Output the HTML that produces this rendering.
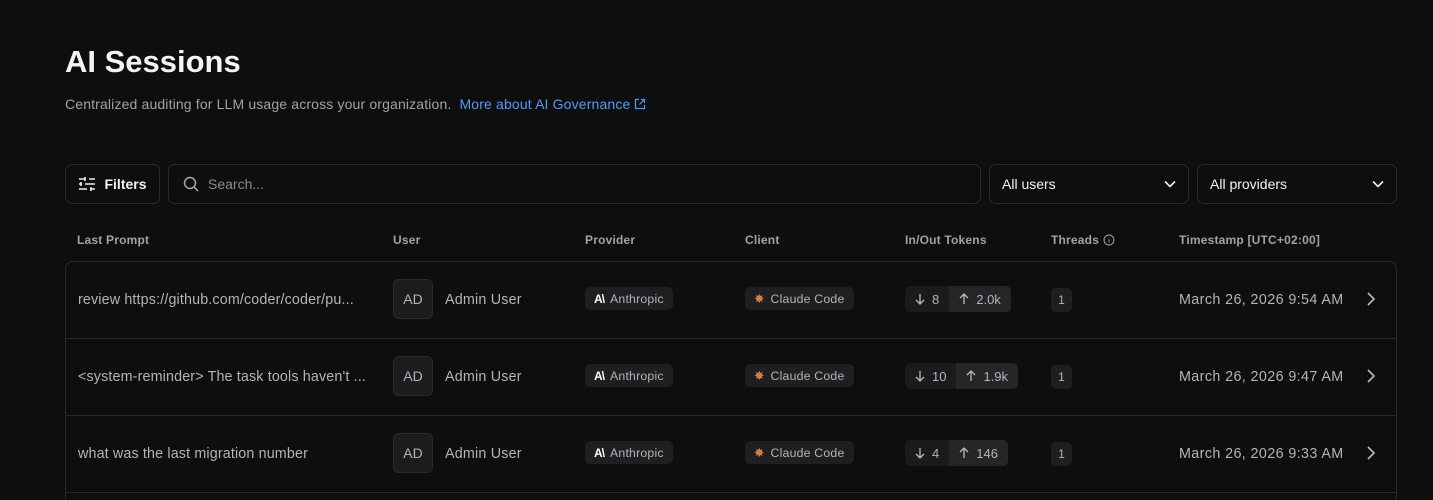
<!DOCTYPE html>
<html><head><meta charset="utf-8"><style>
*{box-sizing:border-box;margin:0;padding:0}
html{overflow:hidden;height:500px}
body{width:1433px;height:500px;background:#0e0e0f;font-family:"Liberation Sans",sans-serif;color:#e5e5e5;position:relative;overflow:hidden}
.abs{position:absolute}
h1{position:absolute;left:65px;top:44px;font-size:31px;font-weight:700;color:#f4f4f5;letter-spacing:0px}
.sub{left:65px;top:96px;font-size:14px;color:#a1a1aa;letter-spacing:0.15px}
.sub a{color:#4c9bf5;text-decoration:none;margin-left:4px}
.box{border:1px solid #2a2a2c;border-radius:7px;background:#0e0e0f}
.btn{left:65px;top:164px;width:95px;height:40px;display:flex;align-items:center;justify-content:center;gap:8px;font-size:14px;color:#f4f4f5;font-weight:600}
.search{left:168px;top:164px;width:813px;height:40px;display:flex;align-items:center;padding-left:14px;gap:9px;font-size:14px;color:#8a8a8f}
.sel{top:164px;height:40px;display:flex;align-items:center;justify-content:space-between;padding:0 12px;font-size:14px;color:#f4f4f5}
.th{top:233px;font-size:12px;color:#a1a1aa;letter-spacing:0.2px;font-weight:600}
.table{left:65px;top:261px;width:1332px;height:260px;border:1px solid #2a2a2c;border-radius:8px}
.row{position:absolute;left:0;width:1330px;height:77px;border-bottom:1px solid #2a2a2c}
.row>*{position:absolute}
.prompt{left:12px;top:30px;font-size:14.3px;color:#b4b4b8;letter-spacing:0.15px}
.av{left:327px;top:17px;width:40px;height:40px;border:1px solid #2a2a2c;background:#1c1c1e;border-radius:6px;display:flex;align-items:center;justify-content:center;font-size:14px;color:#b4b4b8}
.name{left:379px;top:30px;font-size:14.3px;color:#b4b4b8;letter-spacing:0.2px}
.pill{top:25px;height:23px;background:#1f1f21;border-radius:5px;display:flex;align-items:center;gap:6px;padding:0 9px;font-size:12.3px;color:#b4b4b8;letter-spacing:0.2px}
.tok{left:839px;top:24px;height:26px;border-radius:5px;overflow:hidden;display:flex;font-size:13px;color:#b4b4b8}
.tok span{display:flex;align-items:center;gap:7px;padding:0 10px;background:#1b1b1d}
.tok span+span{background:#262628}
.thr{left:985px;top:26px;width:21px;height:24px;background:#1f1f21;border-radius:5px;font-size:12px;color:#b4b4b8;display:flex;align-items:center;justify-content:center}
.ts{left:1113px;top:30px;font-size:14.3px;color:#b4b4b8;letter-spacing:0.4px}
.chev{left:1300px;top:29px}
</style></head><body>
<h1>AI Sessions</h1>
<div class="abs sub">Centralized auditing for LLM usage across your organization. <a>More about AI Governance <svg width="12" height="12" viewBox="0 0 12 12" fill="none" stroke="#4c9bf5" stroke-width="1.2" style="vertical-align:-1px"><path d="M5 1.5H1.5v9h9V7M7 1.5h3.5V5M10.5 1.5 5.5 6.5"/></svg></a></div>
<div class="abs box btn"><svg width="18" height="16" viewBox="0 0 18 16" fill="none" stroke="#eee" stroke-width="1.6"><path d="M1 3h6M11 3h6M7 1v4M1 8h2M7 8h10M3 6v4M1 13h8M13 13h4M13 11v4"/></svg>Filters</div>
<div class="abs box search"><svg width="16" height="16" viewBox="0 0 16 16" fill="none" stroke="#aaa" stroke-width="1.5"><circle cx="7" cy="7" r="5.5"/><path d="M11 11l4 4"/></svg>Search...</div>
<div class="abs box sel" style="left:989px;width:200px">All users<svg width="12" height="8" viewBox="0 0 12 8" fill="none" stroke="#eee" stroke-width="1.6"><path d="M1 1.5l5 5 5-5"/></svg></div>
<div class="abs box sel" style="left:1197px;width:200px">All providers<svg width="12" height="8" viewBox="0 0 12 8" fill="none" stroke="#eee" stroke-width="1.6"><path d="M1 1.5l5 5 5-5"/></svg></div>
<div class="abs th" style="left:77px">Last Prompt</div>
<div class="abs th" style="left:393px">User</div>
<div class="abs th" style="left:585px">Provider</div>
<div class="abs th" style="left:745px">Client</div>
<div class="abs th" style="left:905px">In/Out Tokens</div>
<div class="abs th" style="left:1051px">Threads <svg width="12" height="12" viewBox="0 0 12 12" fill="none" stroke="#a1a1aa" stroke-width="1" style="vertical-align:-2px"><circle cx="6" cy="6" r="5"/><path d="M6 5.2v3.3M6 3.3v.4"/></svg></div>
<div class="abs th" style="left:1179px">Timestamp [UTC+02:00]</div>
<div class="abs table">
<div class="row" style="top:0">
<div class="prompt">review https://github.com/coder/coder/pu...</div>
<div class="av">AD</div><div class="name">Admin User</div>
<div class="pill" style="left:519px"><b style="color:#fff;font-size:12px;letter-spacing:-1px">A\</b>Anthropic</div>
<div class="pill" style="left:679px"><span style="color:#d9774f">✸</span>Claude Code</div>
<div class="tok"><span><svg width="10" height="12" viewBox="0 0 10 12" fill="none" stroke="#bbb" stroke-width="1.3"><path d="M5 1v10M1 7l4 4 4-4"/></svg>8</span><span><svg width="10" height="12" viewBox="0 0 10 12" fill="none" stroke="#bbb" stroke-width="1.3"><path d="M5 11V1M1 5l4-4 4 4"/></svg>2.0k</span></div>
<div class="thr">1</div><div class="ts">March 26, 2026 9:54 AM</div>
<svg class="chev" width="10" height="16" viewBox="0 0 10 16" fill="none" stroke="#bbb" stroke-width="1.6"><path d="M2 2l6 6-6 6"/></svg>
</div>
<div class="row" style="top:77px">
<div class="prompt">&lt;system-reminder&gt; The task tools haven't ...</div>
<div class="av">AD</div><div class="name">Admin User</div>
<div class="pill" style="left:519px"><b style="color:#fff;font-size:12px;letter-spacing:-1px">A\</b>Anthropic</div>
<div class="pill" style="left:679px"><span style="color:#d9774f">✸</span>Claude Code</div>
<div class="tok"><span><svg width="10" height="12" viewBox="0 0 10 12" fill="none" stroke="#bbb" stroke-width="1.3"><path d="M5 1v10M1 7l4 4 4-4"/></svg>10</span><span><svg width="10" height="12" viewBox="0 0 10 12" fill="none" stroke="#bbb" stroke-width="1.3"><path d="M5 11V1M1 5l4-4 4 4"/></svg>1.9k</span></div>
<div class="thr">1</div><div class="ts">March 26, 2026 9:47 AM</div>
<svg class="chev" width="10" height="16" viewBox="0 0 10 16" fill="none" stroke="#bbb" stroke-width="1.6"><path d="M2 2l6 6-6 6"/></svg>
</div>
<div class="row" style="top:154px">
<div class="prompt">what was the last migration number</div>
<div class="av">AD</div><div class="name">Admin User</div>
<div class="pill" style="left:519px"><b style="color:#fff;font-size:12px;letter-spacing:-1px">A\</b>Anthropic</div>
<div class="pill" style="left:679px"><span style="color:#d9774f">✸</span>Claude Code</div>
<div class="tok"><span><svg width="10" height="12" viewBox="0 0 10 12" fill="none" stroke="#bbb" stroke-width="1.3"><path d="M5 1v10M1 7l4 4 4-4"/></svg>4</span><span><svg width="10" height="12" viewBox="0 0 10 12" fill="none" stroke="#bbb" stroke-width="1.3"><path d="M5 11V1M1 5l4-4 4 4"/></svg>146</span></div>
<div class="thr">1</div><div class="ts">March 26, 2026 9:33 AM</div>
<svg class="chev" width="10" height="16" viewBox="0 0 10 16" fill="none" stroke="#bbb" stroke-width="1.6"><path d="M2 2l6 6-6 6"/></svg>
</div>
</div>
</body></html>
